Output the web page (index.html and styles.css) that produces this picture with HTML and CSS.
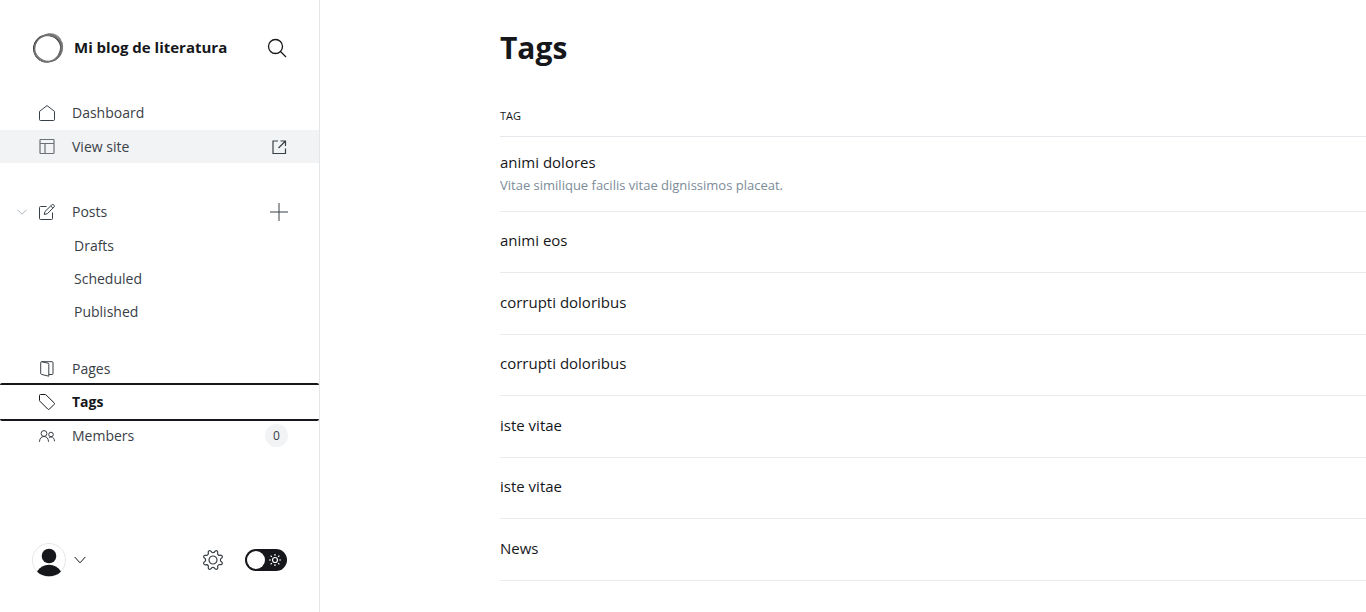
FILE: index.html
```html
<!DOCTYPE html>
<html lang="en">
<head>
<meta charset="utf-8">
<meta name="viewport" content="width=device-width, initial-scale=1">
<title>Tags</title>
<link rel="stylesheet" href="styles.css">
</head>
<body>
<div class="app">
  <aside class="sidebar">
    <header class="brand">
      <svg class="brand-logo" viewBox="0 0 32 32" fill="none" aria-hidden="true">
        <path d="M12 3.500C16 .500 25 1 28.500 7L29.500 12C26 6 20 3.500 12 3.500z" fill="#aaa" stroke="#888" stroke-width=".8"/>
        <path d="M30 10C32 17 29 25 22 29C27 24 29.500 18 28.500 10z" fill="#999" stroke="#777" stroke-width=".8"/>
        <ellipse cx="15.200" cy="16.600" rx="13.600" ry="13.400" stroke="#333" stroke-width="1.200"/>
        <ellipse cx="16.500" cy="16.300" rx="13.800" ry="13" stroke="#777" stroke-width="1.200"/>
        <ellipse cx="15.800" cy="16.500" rx="12.700" ry="14.300" stroke="#666" stroke-width=".8" transform="rotate(35 16 16)"/>
        <ellipse cx="16" cy="16" rx="14.900" ry="13" stroke="#777" stroke-width=".8" transform="rotate(-48 16 16)"/>
      </svg>
      <span class="brand-name">Mi blog de literatura</span>
      <button class="icon-button" type="button" aria-label="Search">
        <svg class="icon-search" viewBox="0 0 20 20" aria-hidden="true"><circle cx="8.500" cy="8.500" r="7"/><path d="M13.500 13.500l5.500 5.500"/></svg>
      </button>
    </header>

    <nav class="nav">
      <ul class="nav-group spaced">
        <li><a class="nav-link" href="#dashboard">
          <svg class="icon" viewBox="0 0 16 16" aria-hidden="true"><path d="M.500 6.400L8 .600l7.500 5.800V14.500a1 1 0 0 1-1 1h-13a1 1 0 0 1-1-1z"/></svg>
          Dashboard</a></li>
        <li><a class="nav-link highlighted" href="#site">
          <svg class="icon icon-site" viewBox="0 0 16 16" aria-hidden="true"><rect x="1" y=".5" width="14" height="14" rx=".8"/><path d="M1 4.500h14M6 4.500v10"/></svg>
          View site
          <svg class="icon icon-external" viewBox="0 0 16 16" aria-hidden="true"><path d="M6 2H1v12.500H13.500V9.500M8.500 2H13.500V7M13.500 2L6.500 9"/></svg></a></li>
      </ul>
      <ul class="nav-group">
        <li class="posts-row">
          <button class="collapse" type="button" aria-label="Collapse posts"><svg viewBox="0 0 10 6" aria-hidden="true"><path d="M.500.800L5 5.200 9.500.800"/></svg></button>
          <a class="nav-link" href="#posts">
            <svg class="icon" viewBox="0 0 16 16" aria-hidden="true"><path d="M7.500 2.500h-6a1 1 0 0 0-1 1v11a1 1 0 0 0 1 1h11a1 1 0 0 0 1-1v-6M6 7.500L12.800.900a1.300 1.300 0 0 1 1.900 0l.3.300a1.300 1.300 0 0 1 0 1.900L8.300 9.700l-3.100.800zM11.800 2l2.200 2.200"/></svg>
            Posts</a>
          <button class="add" type="button" aria-label="New post"><svg viewBox="0 0 18 18" aria-hidden="true"><path d="M9 0v18M0 9h18"/></svg></button>
        </li>
        <li><a class="nav-link sub" href="#drafts">Drafts</a></li>
        <li><a class="nav-link sub" href="#scheduled">Scheduled</a></li>
        <li><a class="nav-link sub" href="#published">Published</a></li>
      </ul>
      <ul class="nav-group library">
        <li><a class="nav-link" href="#pages">
          <svg class="icon" viewBox="0 0 16 16" aria-hidden="true"><path d="M2.500.700l6.500 1.500a1 1 0 0 1 .8 1v12l-7.300-1.800a1 1 0 0 1-.8-1V1.500a.8.800 0 0 1 .8-.8zM2.500.700H13a1 1 0 0 1 1 1v10.800a1 1 0 0 1-1 1H9.800"/></svg>
          Pages</a></li>
        <li><a class="nav-link current" href="#tags" aria-current="page">
          <svg class="icon" viewBox="0 0 16 16" aria-hidden="true"><path d="M1.500.500H6a1.500 1.500 0 0 1 1 .4l8.200 8a1 1 0 0 1 0 1.400l-4.900 4.900a1 1 0 0 1-1.400 0L.900 7.200a1.500 1.500 0 0 1-.4-1V1.500a1 1 0 0 1 1-1z"/></svg>
          Tags</a></li>
        <li><a class="nav-link" href="#members">
          <svg class="icon" viewBox="0 0 16 16" aria-hidden="true"><circle cx="5" cy="5.500" r="2.900"/><path d="M.500 13.800c0-3.200 1.800-5.300 4.500-5.300s4.500 2.100 4.500 5.300"/><circle cx="12" cy="6.500" r="2.300"/><path d="M9.900 9.800c.6-.6 1.300-.9 2.100-.9 2.100 0 3.500 1.800 3.500 4.400"/></svg>
          Members
          <span class="count">0</span></a></li>
      </ul>
    </nav>

    <footer class="account">
      <button class="user" type="button" aria-label="User menu">
        <svg class="avatar" viewBox="0 0 34 34" aria-hidden="true"><circle class="avatar-ring" cx="17" cy="17" r="16.500"/><circle cx="17" cy="13" r="7.300"/><path d="M5 28.500C8 24 12 21.800 17 21.800S26 24 29 28.500C26 31.800 22 33.200 17 33.200S8 31.800 5 28.500z"/></svg>
        <svg class="user-arrow" viewBox="0 0 12 8" aria-hidden="true"><path d="M.700 1L6 6.800 11.300 1"/></svg>
      </button>
      <a class="settings" href="#settings" aria-label="Settings">
        <svg viewBox="-11 -11 22 22" aria-hidden="true"><circle r="4"/><path d="M-2-7.300L-1.300-9.200Q0-10.800 1.300-9.200L2-7.300Q3-6.700 3.800-6.600L5.600-7.500Q7.700-7.700 7.500-5.600L6.600-3.800Q6.700-3 7.300-2L9.200-1.300Q10.800 0 9.200 1.300L7.300 2Q6.700 3 6.600 3.800L7.500 5.600Q7.700 7.700 5.600 7.500L3.800 6.600Q3 6.700 2 7.300L1.300 9.200Q0 10.800-1.300 9.200L-2 7.300Q-3 6.700-3.800 6.600L-5.600 7.500Q-7.700 7.700-7.500 5.600L-6.600 3.800Q-6.700 3-7.300 2L-9.200 1.300Q-10.800 0-9.200-1.300L-7.300-2Q-6.700-3-6.600-3.800L-7.500-5.600Q-7.700-7.700-5.600-7.500L-3.800-6.600Q-3-6.700-2-7.300z" transform="rotate(22.500)"/></svg>
      </a>
      <label class="theme">
        <input class="theme-input" type="checkbox" aria-label="Night shift">
        <span class="theme-knob"></span>
        <svg class="theme-sun" viewBox="0 0 14 14" aria-hidden="true"><circle cx="7" cy="7" r="2.500"/><path d="M7 1v1.800M7 11.200V13M1 7h1.800M11.200 7H13M2.600 2.600l1.300 1.300M10.100 10.100l1.300 1.300M2.600 11.400l1.300-1.300M10.100 3.900l1.300-1.300"/></svg>
      </label>
    </footer>
  </aside>

  <main class="content">
    <h1 class="title">Tags</h1>
    <table class="tags">
      <thead><tr><th scope="col">Tag</th></tr></thead>
      <tbody>
        <tr class="described"><td><a class="tag-name" href="#t1">animi dolores</a><p class="tag-description">Vitae similique facilis vitae dignissimos placeat.</p></td></tr>
        <tr><td><a class="tag-name" href="#t2">animi eos</a></td></tr>
        <tr><td><a class="tag-name" href="#t3">corrupti doloribus</a></td></tr>
        <tr><td><a class="tag-name" href="#t4">corrupti doloribus</a></td></tr>
        <tr><td><a class="tag-name" href="#t5">iste vitae</a></td></tr>
        <tr><td><a class="tag-name" href="#t6">iste vitae</a></td></tr>
        <tr><td><a class="tag-name" href="#t7">News</a></td></tr>
      </tbody>
    </table>
  </main>
</div>
</body>
</html>
```
FILE: styles.css
```css
*, *::before, *::after { box-sizing: border-box; }

body {
  margin: 0;
  background: #fff;
  color: #15171a;
  font: 15px/20px "Open Sans", "Noto Sans", sans-serif;
}

a { color: inherit; text-decoration: none; }
ul { list-style: none; margin: 0; padding: 0; }
svg { display: block; flex: none; fill: none; stroke: currentColor; }

button {
  display: flex;
  align-items: center;
  padding: 0;
  border: 0;
  background: none;
  color: inherit;
}

.app { display: flex; min-height: 100vh; }

.sidebar {
  display: flex;
  flex-direction: column;
  flex: none;
  width: 320px;
  border-right: 1px solid #e5e6e8;
}

.brand {
  display: flex;
  align-items: center;
  gap: 10px;
  padding: 32px;
}

.brand-logo { width: 32px; height: 32px; }
.brand-name { flex: 1; padding-bottom: 2px; font-weight: 700; white-space: nowrap; }
.icon-search { width: 20px; height: 20px; stroke-width: 1.3; }

.nav {
  display: flex;
  flex-direction: column;
  gap: 32px;
  color: #394047;
  font-size: 14px;
}

.nav-group { display: flex; flex-direction: column; }
.spaced { gap: 1px; }
.library { margin-top: -8px; }

.nav-link {
  display: flex;
  align-items: center;
  gap: 17px;
  height: 33px;
  padding: 0 31px 0 39px;
}

.icon { width: 16px; height: 16px; }
.icon-site { color: #6b7177; stroke-width: 1.2; }
.icon-external { margin-left: auto; stroke-width: 1.2; }
.highlighted { background: #f1f3f4; }
.sub { padding-left: 74px; }

.current {
  height: 38px;
  margin: -2px 0;
  border: solid #15171a;
  border-width: 2px 0;
  border-radius: 2px;
  color: #15171a;
  font-weight: 700;
}

.posts-row { display: flex; align-items: center; margin-bottom: 1px; padding: 0 31px 0 17px; }
.posts-row .nav-link { flex: 1; padding: 0 0 0 12px; }
.collapse svg { width: 10px; height: 6px; color: #abb4be; }
.add svg { width: 18px; height: 18px; }

.count {
  width: 23px;
  margin-left: auto;
  border-radius: 12px;
  background: #f1f3f4;
  font-size: 12px;
  line-height: 23px;
  text-align: center;
}

.account {
  display: flex;
  align-items: center;
  gap: 21px;
  margin-top: auto;
  padding: 0 32px 35px;
  color: #15171a;
}

.user { gap: 8px; margin-right: auto; }
.avatar { width: 34px; height: 34px; fill: #15171a; stroke: none; }
.avatar-ring { fill: #fff; stroke: #e5e6e8; }
.user-arrow { width: 12px; height: 8px; }
.settings { color: #394047; }
.settings svg { width: 22px; height: 22px; stroke-width: 1.2; }

.theme {
  position: relative;
  display: flex;
  align-items: center;
  justify-content: space-between;
  width: 42px;
  height: 22px;
  padding: 0 5px 0 2px;
  border-radius: 11px;
  background: #15171a;
  color: #fff;
}

.theme-input { position: absolute; inset: 0; width: 100%; height: 100%; margin: 0; opacity: 0; }
.theme-knob { width: 18px; height: 18px; border-radius: 50%; background: #fff; }
.theme-sun { width: 14px; height: 14px; stroke-width: 1.2; }

.content { flex: 1; min-width: 0; padding: 28px 0 31px 180px; }
.title { margin: 0; font-size: 30px; font-weight: 700; line-height: 40px; }

.tags { width: 100%; margin-top: 27px; border-collapse: separate; border-spacing: 0; }

.tags th {
  height: 42px;
  padding: 0;
  border-bottom: 1px solid #e5e9ed;
  font-size: 11px;
  font-weight: 400;
  text-align: left;
  text-transform: uppercase;
}

.tags td { height: 62px; padding: 0 0 4px; border-bottom: 1px solid #e9eaeb; }
.tags tr:nth-child(even) td { height: 61px; }
.tags .described td { height: 75px; padding-bottom: 2px; }
.tag-name { display: block; line-height: 24px; }
.tag-description { margin: 0; color: #7c8b9a; font-size: 13px; line-height: 22px; }
```
